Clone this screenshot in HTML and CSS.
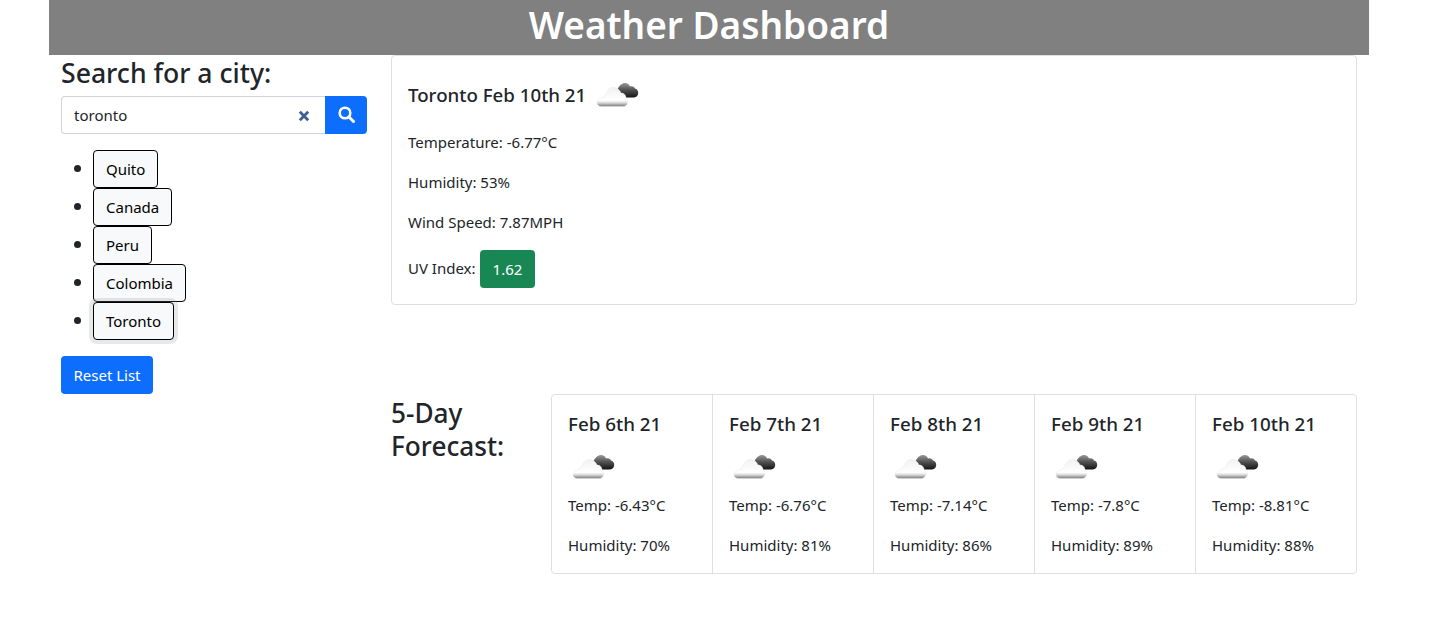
FILE: index.html
```html
<!DOCTYPE html>
<html lang="en">
<head>
    <meta charset="UTF-8">
    <meta name="viewport" content="width=device-width, initial-scale=1.0">
    <title>Weather Dashboard</title>
    <link rel="stylesheet" href="styles.css">
</head>
<body>
    <svg class="defs" width="0" height="0">
        <defs>
            <linearGradient id="whiteCloud" x1="0" y1="0" x2="0" y2="1">
                <stop offset="0" stop-color="#f2f2f2"/>
                <stop offset="0.68" stop-color="#ffffff"/>
                <stop offset="0.8" stop-color="#dcdcdc"/>
                <stop offset="1" stop-color="#777777"/>
            </linearGradient>
            <linearGradient id="darkCloud" x1="0" y1="0" x2="0" y2="1">
                <stop offset="0" stop-color="#9a9a9a"/>
                <stop offset="0.45" stop-color="#555555"/>
                <stop offset="1" stop-color="#141414"/>
            </linearGradient>
            <symbol id="cloudIcon" viewBox="0 0 50 50">
                <path fill="url(#darkCloud)" d="M25 19.500c.5-4 3.500-7.500 7-8.500 3-.5 5 1 6 3.500 2-.6 4 0 5 2 2 .4 3.200 2 3.200 4.300S44.700 25.500 42 25.500H34c-2-3-5-5-9-6z"/>
                <path fill="url(#whiteCloud)" stroke="#e6e6e6" stroke-width=".5" d="M5 31c0-3 2.500-5 6-5.500 0-1 1-2 2.500-2.500C15 18 18 15 22 15.500c3 .4 6 2.500 7 5.500 3 0 5 2 5 5 1.500 1 2 3 1.500 5-.5 2-2 3.500-4 3.500H9.500C7 34.500 5 33 5 31z"/>
            </symbol>
        </defs>
    </svg>

    <div class="container">
        <header class="page-header">
            <h1>Weather Dashboard</h1>
        </header>

        <div class="row">
            <aside class="sidebar">
                <h3>Search for a city:</h3>
                <form class="search-group">
                    <div class="search-field">
                        <input type="text" value="toronto">
                        <svg class="clear-icon" width="12" height="12" viewBox="0 0 12 12">
                            <path d="M1.800 1.800l8.400 8.400M10.200 1.800l-8.400 8.400" stroke="#3f5f92" stroke-width="2.800" fill="none"/>
                        </svg>
                    </div>
                    <button type="button" class="btn-search">
                        <svg width="17" height="17" viewBox="0 0 17 17">
                            <circle cx="7" cy="7" r="5.300" stroke="#fff" stroke-width="2.600" fill="none"/>
                            <path d="M11 11l4.500 4.500" stroke="#fff" stroke-width="3" stroke-linecap="round"/>
                        </svg>
                    </button>
                </form>
                <ul class="city-list">
                    <li><button type="button" class="btn-city">Quito</button></li>
                    <li><button type="button" class="btn-city">Canada</button></li>
                    <li><button type="button" class="btn-city">Peru</button></li>
                    <li><button type="button" class="btn-city">Colombia</button></li>
                    <li><button type="button" class="btn-city focused">Toronto</button></li>
                </ul>
                <button type="button" class="btn-reset">Reset List</button>
            </aside>

            <main class="content">
                <section class="card current">
                    <div class="current-title">
                        <span>Toronto Feb 10th 21</span>
                        <svg class="icon" width="50" height="50"><use href="#cloudIcon"/></svg>
                    </div>
                    <p>Temperature: -6.77°C</p>
                    <p>Humidity: 53%</p>
                    <p>Wind Speed: 7.87MPH</p>
                    <p class="uv"><span class="uv-label">UV Index:</span> <span class="uv-badge">1.62</span></p>
                </section>

                <section class="forecast">
                    <h3>5-Day Forecast:</h3>
                    <div class="card forecast-group">
                        <div class="day">
                            <h5>Feb 6th 21</h5>
                            <svg class="icon" width="50" height="50"><use href="#cloudIcon"/></svg>
                            <p>Temp: -6.43°C</p>
                            <p>Humidity: 70%</p>
                        </div>
                        <div class="day">
                            <h5>Feb 7th 21</h5>
                            <svg class="icon" width="50" height="50"><use href="#cloudIcon"/></svg>
                            <p>Temp: -6.76°C</p>
                            <p>Humidity: 81%</p>
                        </div>
                        <div class="day">
                            <h5>Feb 8th 21</h5>
                            <svg class="icon" width="50" height="50"><use href="#cloudIcon"/></svg>
                            <p>Temp: -7.14°C</p>
                            <p>Humidity: 86%</p>
                        </div>
                        <div class="day">
                            <h5>Feb 9th 21</h5>
                            <svg class="icon" width="50" height="50"><use href="#cloudIcon"/></svg>
                            <p>Temp: -7.8°C</p>
                            <p>Humidity: 89%</p>
                        </div>
                        <div class="day">
                            <h5>Feb 10th 21</h5>
                            <svg class="icon" width="50" height="50"><use href="#cloudIcon"/></svg>
                            <p>Temp: -8.81°C</p>
                            <p>Humidity: 88%</p>
                        </div>
                    </div>
                </section>
            </main>
        </div>
    </div>
</body>
</html>
```

FILE: styles.css
```css
* {
    box-sizing: border-box;
}
body {
    margin: 0;
    font-family: "Noto Sans", "Open Sans", Arial, sans-serif;
    font-size: 15px;
    line-height: 24px;
    color: #212529;
    background-color: #fff;
}
.defs {
    position: absolute;
}
.container {
    width: 1320px;
    margin-left: 49px;
}
.page-header {
    height: 55px;
    background-color: #808080;
    text-align: center;
}
h1 {
    margin: 0;
    color: #fff;
    font-size: 37px;
    font-weight: 600;
    line-height: 50px;
}
h3 {
    margin: 0;
    font-size: 26.600px;
    font-weight: 500;
    line-height: 33px;
}
h5 {
    margin: 0 0 8px;
    font-size: 18.800px;
    font-weight: 500;
    line-height: 24px;
}
p {
    margin: 0 0 16px;
}
.row {
    display: flex;
}
.sidebar {
    width: 330px;
    padding: 0 12px;
}
.sidebar h3 {
    padding-top: 2px;
    margin-bottom: 6px;
}
.content {
    width: 990px;
    padding: 0 12px;
}
.search-group {
    display: flex;
    height: 38px;
}
.search-field {
    position: relative;
    flex: 1;
}
.search-field input {
    width: 100%;
    height: 38px;
    padding: 6px 12px;
    border: 1px solid #ced4da;
    border-right: none;
    border-radius: 4px 0 0 4px;
    font: inherit;
    color: #212529;
}
.clear-icon {
    position: absolute;
    top: 14px;
    right: 15px;
}
.btn-search {
    width: 42px;
    padding: 0 0 2px;
    border: none;
    border-radius: 0 4px 4px 0;
    background-color: #0d6efd;
    display: flex;
    align-items: center;
    justify-content: center;
}
.city-list {
    margin: 16px 0;
    padding-left: 34px;
}
.city-list li {
    height: 38px;
    font-size: 16px;
}
.city-list li::marker {
    font-size: 21px;
}
.btn-city {
    height: 38px;
    margin-left: -2px;
    padding: 0 12px;
    border: 1px solid #000;
    border-radius: 4px;
    background-color: #f8f9fa;
    color: #000;
    font: inherit;
    font-size: 15px;
}
.btn-city.focused {
    box-shadow: 0 0 0 4px rgba(130, 138, 145, 0.2);
}
.btn-reset {
    width: 92px;
    height: 38px;
    padding: 0;
    border: none;
    border-radius: 4px;
    background-color: #0d6efd;
    color: #fff;
    font: inherit;
}
.card {
    border: 1px solid #dfdfdf;
    border-radius: 4px;
}
.current {
    height: 250px;
    padding: 16px;
}
.current-title {
    display: flex;
    align-items: flex-start;
    height: 42px;
    margin-bottom: 16px;
    font-size: 18.700px;
    font-weight: 500;
}
.current-title span {
    padding-top: 11px;
    margin-right: 6px;
}
.icon {
    display: block;
    flex: none;
}
.uv {
    display: flex;
    align-items: center;
    gap: 4px;
    margin: 0;
}
.uv-label {
    margin-bottom: 3px;
}
.uv-badge {
    height: 38px;
    padding: 7px 13px;
    border-radius: 4px;
    background-color: #198754;
    color: #fff;
}
.forecast {
    display: flex;
    margin-top: 89px;
}
.forecast h3 {
    width: 160px;
    margin-top: 3px;
    padding-right: 30px;
    font-size: 26.200px;
}
.forecast-group {
    display: flex;
    width: 806px;
    height: 180px;
}
.day {
    flex: 1;
    padding: 17px 16px 0;
    border-left: 1px solid #dfdfdf;
}
.day:first-child {
    border-left: none;
}
.day .icon {
    margin-bottom: -1px;
}
.day p:last-child {
    margin-bottom: 0;
}
```
